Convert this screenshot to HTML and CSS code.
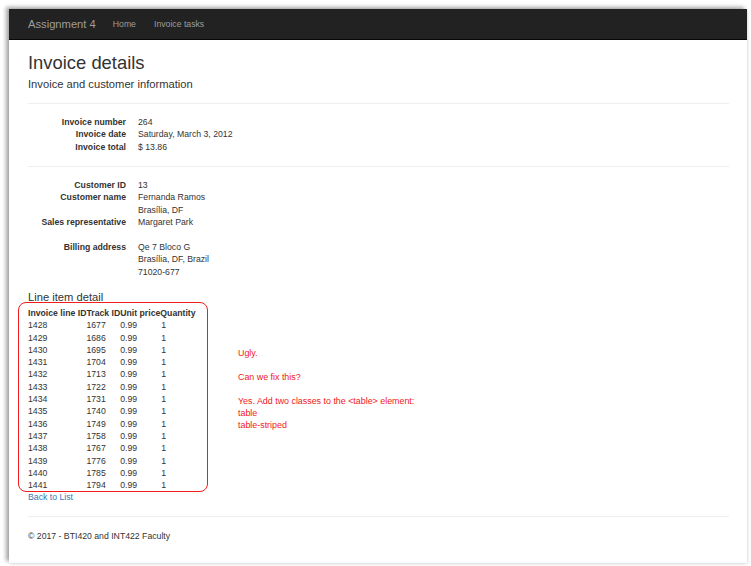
FILE: index.html
```html
<!DOCTYPE html>
<html>
<head>
<meta charset="utf-8">
<title>Invoice details</title>
<link rel="stylesheet" href="styles.css">
</head>
<body>
<div class="shot">
  <nav class="navbar">
    <div class="container nav-inner">
      <a class="brand" href="#">Assignment 4</a>
      <a class="nav-link" href="#">Home</a>
      <a class="nav-link" href="#">Invoice tasks</a>
    </div>
  </nav>
  <main class="container body-content">
    <h1 class="title">Invoice details</h1>
    <h4 class="subtitle">Invoice and customer information</h4>
    <hr class="rule">
    <dl class="dl-horizontal">
      <dt>Invoice number</dt><dd>264</dd>
      <dt>Invoice date</dt><dd>Saturday, March 3, 2012</dd>
      <dt>Invoice total</dt><dd>$ 13.86</dd>
    </dl>
    <hr class="rule">
    <dl class="dl-horizontal">
      <dt>Customer ID</dt><dd>13</dd>
      <dt>Customer name</dt><dd>Fernanda Ramos<br>Brasília, DF</dd>
      <dt>Sales representative</dt><dd>Margaret Park</dd>
      <dt class="blank">&nbsp;</dt><dd class="blank">&nbsp;</dd>
      <dt>Billing address</dt><dd>Qe 7 Bloco G<br>Brasília, DF, Brazil<br>71020-677</dd>
    </dl>
    <h4 class="section">Line item detail</h4>
    <table class="items">
      <thead>
        <tr><th>Invoice line ID</th><th>Track ID</th><th>Unit price</th><th>Quantity</th></tr>
      </thead>
      <tbody>
        <tr><td>1428</td><td>1677</td><td>0.99</td><td>1</td></tr>
        <tr><td>1429</td><td>1686</td><td>0.99</td><td>1</td></tr>
        <tr><td>1430</td><td>1695</td><td>0.99</td><td>1</td></tr>
        <tr><td>1431</td><td>1704</td><td>0.99</td><td>1</td></tr>
        <tr><td>1432</td><td>1713</td><td>0.99</td><td>1</td></tr>
        <tr><td>1433</td><td>1722</td><td>0.99</td><td>1</td></tr>
        <tr><td>1434</td><td>1731</td><td>0.99</td><td>1</td></tr>
        <tr><td>1435</td><td>1740</td><td>0.99</td><td>1</td></tr>
        <tr><td>1436</td><td>1749</td><td>0.99</td><td>1</td></tr>
        <tr><td>1437</td><td>1758</td><td>0.99</td><td>1</td></tr>
        <tr><td>1438</td><td>1767</td><td>0.99</td><td>1</td></tr>
        <tr><td>1439</td><td>1776</td><td>0.99</td><td>1</td></tr>
        <tr><td>1440</td><td>1785</td><td>0.99</td><td>1</td></tr>
        <tr><td>1441</td><td>1794</td><td>0.99</td><td>1</td></tr>
      </tbody>
    </table>
    <a class="back" href="#">Back to List</a>
    <hr class="rule footer-rule">
    <footer class="footer"><p>© 2017 - BTI420 and INT422 Faculty</p></footer>
  </main>
  <div class="callout"></div>
  <div class="note">
    <p>Ugly.</p>
    <p>Can we fix this?</p>
    <p>Yes. Add two classes to the &lt;table&gt; element:<br>table<br>table-striped</p>
  </div>
</div>
</body>
</html>
```

FILE: styles.css
```css
* { box-sizing: border-box; }
html, body { margin: 0; padding: 0; background: #fff; }
body {
  padding: 9px 4px 3px 9px;
  font-family: "Liberation Sans", Arial, sans-serif;
  font-size: 8.7px;
  line-height: 12.4px;
  color: #333;
}
.shot {
  position: relative;
  width: 738px;
  height: 554px;
  overflow: hidden;
  background: #fff;
  box-shadow: -3px -2px 4px rgba(0,0,0,0.35), 1px 1px 3px rgba(0,0,0,0.12);
}
.container { padding: 0 18px 0 19px; }
.navbar {
  height: 31px;
  background: #222;
  border-bottom: 1px solid #080808;
}
.nav-inner {
  display: flex;
  align-items: center;
  height: 30px;
}
.brand {
  font-size: 11.2px;
  color: #9d9d9d;
  text-decoration: none;
  margin-right: 8px;
}
.nav-link {
  font-size: 8.7px;
  color: #9d9d9d;
  text-decoration: none;
  padding: 0 9px;
}
.body-content { padding-top: 0; }
.title {
  margin: 13px 0 4.5px;
  font-size: 18.4px;
  line-height: 20.2px;
  font-weight: 500;
  color: #333;
}
.subtitle {
  margin: 0;
  font-size: 11.2px;
  line-height: 12.4px;
  font-weight: 500;
}
.rule {
  margin: 12.4px 0;
  border: 0;
  border-top: 1px solid #eee;
}
.dl-horizontal {
  display: grid;
  grid-template-columns: 98px auto;
  column-gap: 12px;
  margin: 0 0 12.4px;
}
.dl-horizontal dt {
  font-weight: bold;
  text-align: right;
  white-space: nowrap;
}
.dl-horizontal dd { margin: 0; }
.section {
  margin: 0 0 4px;
  font-size: 11.2px;
  line-height: 12.4px;
  font-weight: 500;
}
.items {
  border-collapse: collapse;
  border-spacing: 0;
}
.items th, .items td {
  padding: 0;
  text-align: left;
  line-height: 12.3px;
}
.items th { font-weight: bold; }
.items td:nth-child(4) { padding-left: 1px; }
.back {
  display: block;
  color: #337ab7;
  text-decoration: none;
}
.footer p { margin: 0; }
.footer-rule { margin-bottom: 12.4px; }
.callout {
  position: absolute;
  left: 9px;
  top: 293px;
  width: 190px;
  height: 190px;
  border: 1.6px solid #f21c1c;
  border-radius: 8px;
}
.note {
  position: absolute;
  left: 229px;
  top: 338px;
  color: #f01818;
  font-family: "Liberation Sans", Arial, sans-serif;
  font-size: 8.9px;
  line-height: 12px;
}
.note p { margin: 0 0 12px; }
```
